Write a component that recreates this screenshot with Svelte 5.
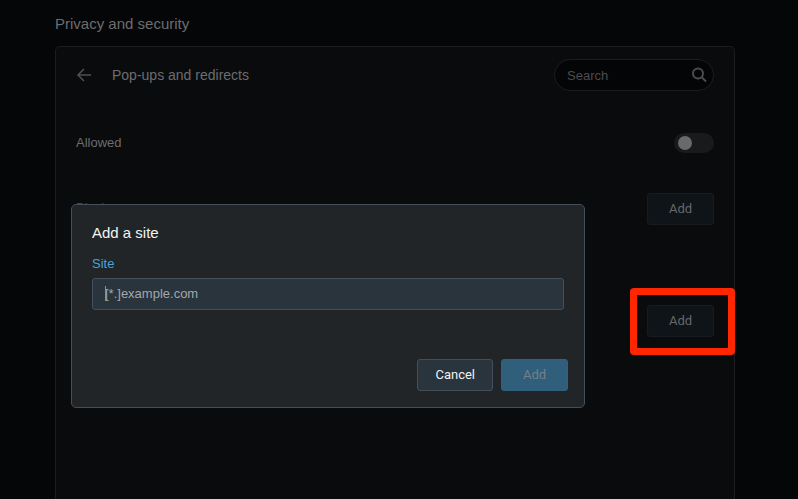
<script>
  let allowed = false;
  let query = '';
  let site = '';
  let showDialog = true;

  const sections = [
    { id: 'block', title: 'Block' },
    { id: 'allow', title: 'Allow', highlighted: true }
  ];

  function openDialog() {
    site = '';
    showDialog = true;
  }

  function closeDialog() {
    showDialog = false;
  }
</script>

<main class="page">
  <h1>Privacy and security</h1>

  <section class="card">
    <header class="card-header">
      <button class="back" aria-label="Back">
        <svg width="16" height="16" viewBox="0 0 16 16" fill="none" stroke="currentColor" stroke-width="1.5">
          <path d="M8 2L2 8l6 6M2 8h13" />
        </svg>
      </button>
      <h2>Pop-ups and redirects</h2>
      <div class="search">
        <input type="text" placeholder="Search" aria-label="Search" bind:value={query} />
        <svg width="16" height="16" viewBox="0 0 16 16" fill="none" stroke="currentColor" stroke-width="2">
          <circle cx="7" cy="6.5" r="5" />
          <path d="M10.5 10l4.5 4.5" />
        </svg>
      </div>
    </header>

    <label class="row toggle-row">
      <span>Allowed</span>
      <input class="toggle" type="checkbox" bind:checked={allowed} />
    </label>

    {#each sections as section (section.id)}
      <div class="row section-row">
        <span class="section-title">{section.title}</span>
        <div class="action">
          <button class="btn muted" on:click={openDialog}>Add</button>
          {#if section.highlighted}
            <div class="highlight"></div>
          {/if}
        </div>
      </div>
    {/each}

    {#if showDialog}
      <div class="dialog" role="dialog" aria-labelledby="dialog-title">
        <h3 id="dialog-title">Add a site</h3>
        <label class="field-label" for="site">Site</label>
        <div class="field">
          <input id="site" type="text" placeholder="[*.]example.com" bind:value={site} />
          {#if !site}
            <span class="caret"></span>
          {/if}
        </div>
        <div class="buttons">
          <button class="btn" on:click={closeDialog}>Cancel</button>
          <button class="btn primary" disabled={!site} on:click={closeDialog}>Add</button>
        </div>
      </div>
    {/if}
  </section>
</main>

<style>
  :global(body) {
    margin: 0;
    background: #050608;
  }

  .page {
    box-sizing: border-box;
    display: flex;
    flex-direction: column;
    gap: 12px;
    min-height: 100vh;
    padding: 14px 63px 0 55px;
    color: #6c6d6e;
    font: 13px/20px "Liberation Sans", Arial, sans-serif;
  }

  h1,
  h2,
  h3 {
    margin: 0;
    font-weight: 400;
  }

  h1 {
    font-size: 15px;
    line-height: 20px;
  }

  .card {
    position: relative;
    flex: 1;
    padding: 12px 20px 0;
    border: 1px solid #1b1d1f;
    border-bottom: none;
    border-radius: 5px 5px 0 0;
    background: #0a0b0d;
  }

  .card-header {
    display: flex;
    align-items: center;
  }

  .back {
    display: flex;
    padding: 0;
    border: none;
    background: none;
    color: #4f5051;
    cursor: pointer;
  }

  h2 {
    flex: 1;
    margin-left: 20px;
    font-size: 14px;
  }

  .search {
    position: relative;
    width: 160px;
    color: #4b4c4d;
  }

  input {
    box-sizing: border-box;
    outline: none;
    font: inherit;
  }

  .search input {
    display: block;
    width: 100%;
    height: 32px;
    padding: 0 36px 0 12px;
    border: 1px solid #1b1d1f;
    border-radius: 16px;
    background: #040507;
    color: #6c6d6e;
  }

  .search input::placeholder {
    color: #4b4c4d;
    opacity: 1;
  }

  .search svg {
    position: absolute;
    top: 8px;
    right: 7px;
    color: #4b4c4d;
  }

  .row {
    display: flex;
    align-items: center;
    justify-content: space-between;
  }

  .toggle-row {
    margin: 42px 0 40px;
  }

  .toggle {
    appearance: none;
    width: 40px;
    height: 20px;
    margin: 0;
    padding: 3px 4px;
    border-radius: 10px;
    background: #181a1b;
    cursor: pointer;
  }

  .toggle::before {
    content: '';
    display: block;
    width: 14px;
    height: 14px;
    border-radius: 50%;
    background: #6a6a6a;
  }

  .toggle:checked::before {
    margin-left: auto;
  }

  .section-row {
    margin-bottom: 80px;
  }

  .section-title {
    padding-bottom: 2px;
    color: #46484a;
  }

  .action {
    position: relative;
  }

  .btn {
    box-sizing: border-box;
    height: 32px;
    min-width: 67px;
    padding: 0 17px;
    border: 1px solid #434f5a;
    border-radius: 3px;
    background: #29343d;
    color: #f2f3f4;
    font: 13px/20px Roboto, sans-serif;
    cursor: pointer;
  }

  .btn.muted {
    border-color: #171c20;
    background: #0f1418;
    color: #666768;
  }

  .btn.primary {
    border-color: #30617d;
    background: #2f5f7a;
    color: #758088;
  }

  .highlight {
    position: absolute;
    inset: -17px -21px -18px -17px;
    border: 7px solid #ff2600;
    border-radius: 4px;
    pointer-events: none;
  }

  .dialog {
    box-sizing: border-box;
    position: absolute;
    top: 157px;
    left: 15px;
    width: calc(100% - 30px);
    max-width: 514px;
    padding: 18px 16px 16px 20px;
    border: 1px solid #434f5a;
    border-radius: 5px;
    background: #212527;
  }

  h3 {
    color: #f2f3f4;
    font-size: 15px;
    line-height: 20px;
  }

  .field-label {
    display: block;
    margin: 11px 0 4px;
    color: #46a3d6;
  }

  .field {
    position: relative;
    margin-right: 4px;
  }

  .field input {
    display: block;
    width: 100%;
    height: 32px;
    padding: 0 12px 2px;
    border: 1px solid #434f5a;
    border-radius: 3px;
    background: #29343d;
    color: #f2f3f4;
  }

  .field input::placeholder {
    color: #a3a7ab;
    opacity: 1;
  }

  .caret {
    position: absolute;
    top: 8px;
    left: 13px;
    width: 1px;
    height: 15px;
    background: #46a3d6;
  }

  .buttons {
    display: flex;
    justify-content: flex-end;
    gap: 8px;
    margin-top: 49px;
  }
</style>
